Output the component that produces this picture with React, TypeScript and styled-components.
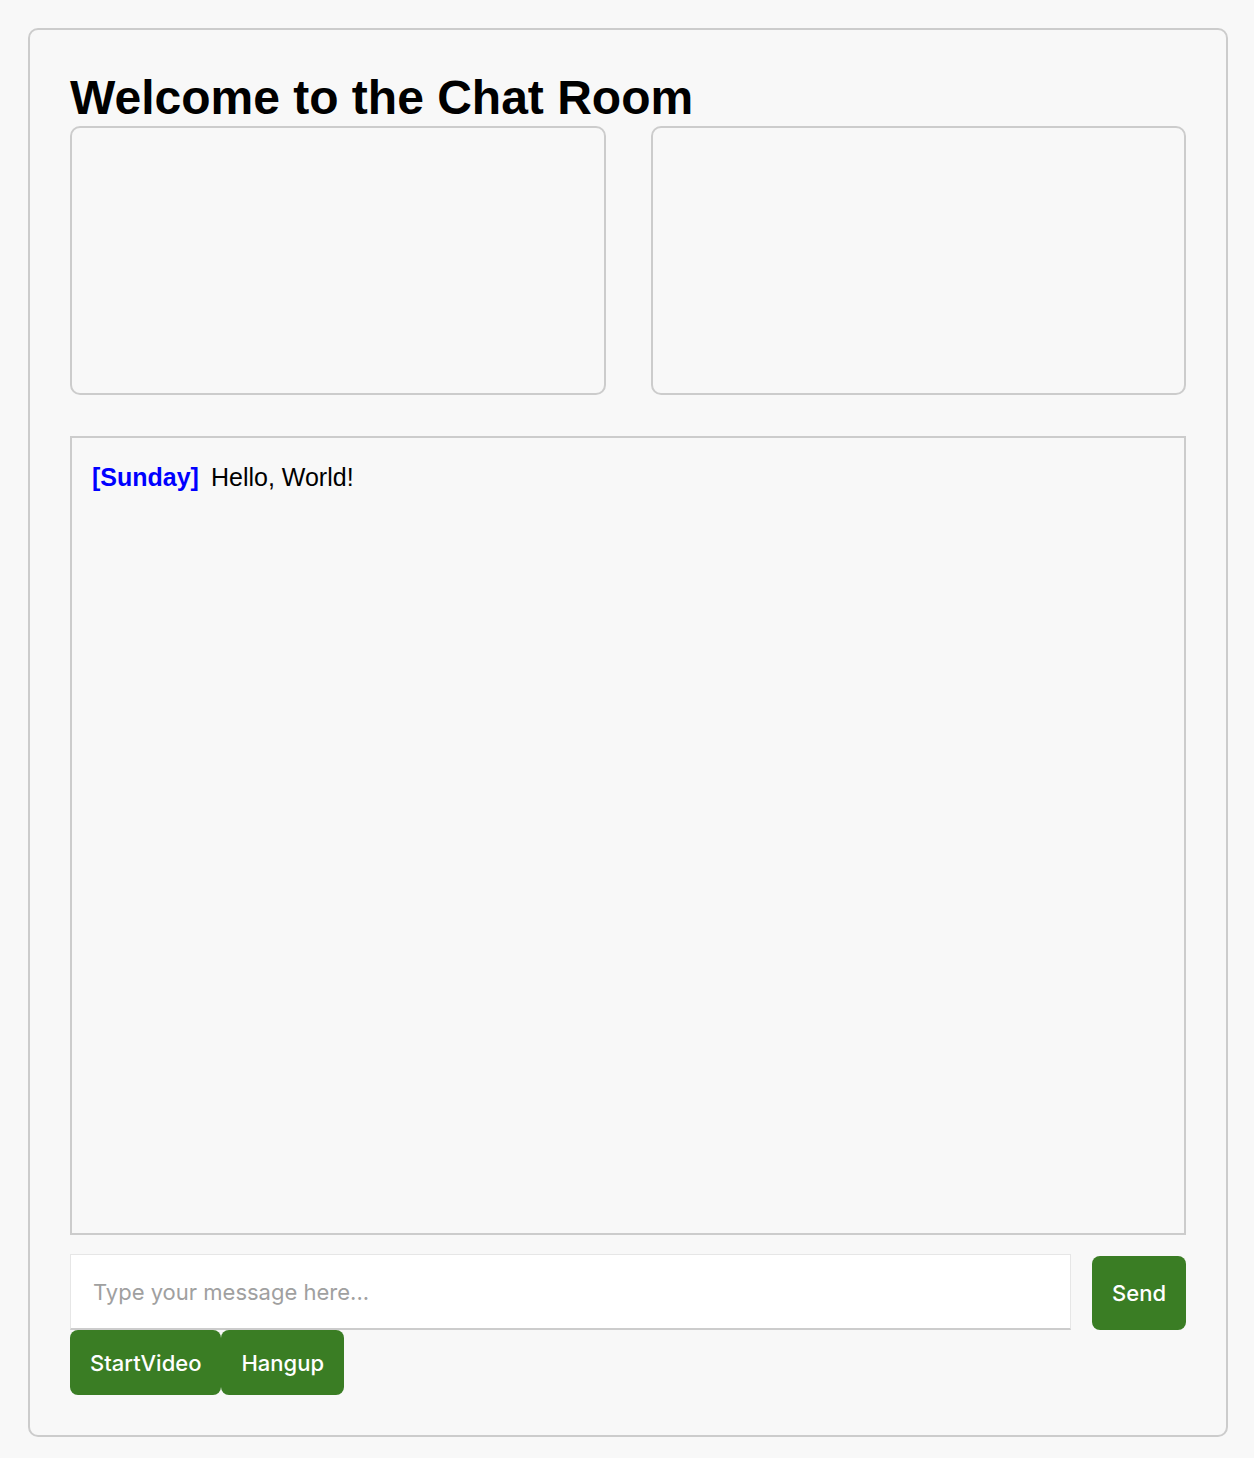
import React from "react";
import styled, { createGlobalStyle } from "styled-components";

const GlobalStyle = createGlobalStyle`
  body {
    margin: 0;
    padding: 28px 26px 20px 28px;
    background-color: #f8f8f8;
    font-family: "Liberation Sans", Arial, sans-serif;
  }
`;

const Room = styled.div`
  border: 2px solid #cccccc;
  border-radius: 10px;
  padding: 40px;
  background-color: #f8f8f8;
`;

const Title = styled.h1`
  margin: 0;
  font-size: 48px;
  line-height: 56px;
  font-weight: bold;
  color: #000;
`;

const VideoRow = styled.div`
  display: grid;
  grid-template-columns: 1fr 1fr;
  gap: 45px;
  margin-bottom: 41px;
`;

const VideoBox = styled.div`
  height: 265px;
  border: 2px solid #cccccc;
  border-radius: 10px;
`;

const ChatLog = styled.div`
  height: 749px;
  border: 2px solid #cccccc;
  padding: 25px 20px 21px;
  font-size: 25px;
  color: #000;
`;

const MessageLine = styled.div`
  display: flex;
  align-items: baseline;
`;

const Sender = styled.span`
  color: #0000ff;
  font-weight: bold;
  margin-right: 12px;
`;

const InputRow = styled.div`
  display: flex;
  align-items: flex-end;
  gap: 21px;
  margin-top: 19px;
`;

const MessageInput = styled.input`
  flex: 1;
  height: 76px;
  box-sizing: border-box;
  padding: 0 22px;
  background: #ffffff;
  border: 1px solid #e6e6e6;
  border-bottom: 2px solid #cccccc;
  font-family: Inter, "Noto Sans", sans-serif;
  font-size: 22px;
  color: #333;
  outline: none;

  &::placeholder {
    color: #a0a0a0;
  }
`;

const ActionButton = styled.button<{ $tall?: boolean }>`
  height: ${(p) => (p.$tall ? "74px" : "65px")};
  padding: 0 20px;
  border: none;
  border-radius: 8px;
  background-color: #3a7d24;
  color: #ffffff;
  font-family: Inter, "Noto Sans", sans-serif;
  font-size: 22px;
  font-weight: 500;
  cursor: pointer;
`;

const ControlRow = styled.div`
  display: flex;
`;

export default function App() {
  return (
    <>
      <GlobalStyle />
      <Room>
        <Title>Welcome to the Chat Room</Title>
        <VideoRow>
          <VideoBox />
          <VideoBox />
        </VideoRow>
        <ChatLog>
          <MessageLine>
            <Sender>[Sunday]</Sender>
            <span>Hello, World!</span>
          </MessageLine>
        </ChatLog>
        <InputRow>
          <MessageInput placeholder="Type your message here..." />
          <ActionButton $tall>Send</ActionButton>
        </InputRow>
        <ControlRow>
          <ActionButton>StartVideo</ActionButton>
          <ActionButton>Hangup</ActionButton>
        </ControlRow>
      </Room>
    </>
  );
}
